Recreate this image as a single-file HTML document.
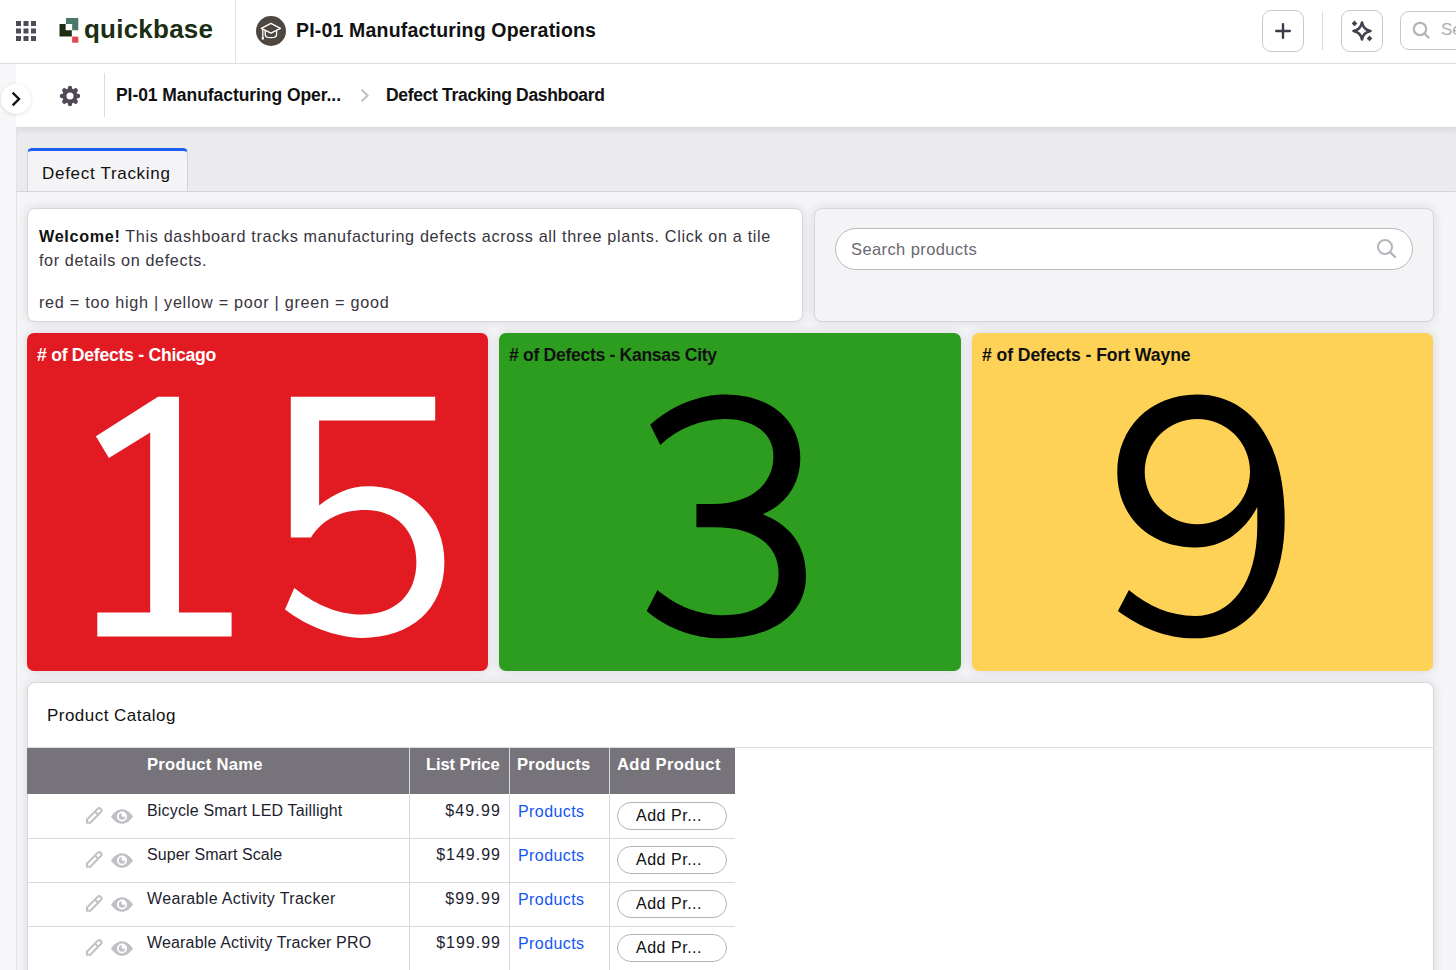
<!DOCTYPE html>
<html><head><meta charset="utf-8">
<style>
html,body{margin:0;padding:0;width:1456px;height:970px;overflow:hidden;background:#f5f5f7;font-family:"Liberation Sans",sans-serif;}
.a{position:absolute;}
.t{position:absolute;white-space:nowrap;line-height:1;}
#topbar{left:0;top:0;width:1456px;height:63px;background:#fff;border-bottom:1px solid #dedde2;}
#leftstrip{left:0;top:64px;width:16px;height:906px;background:#f7f7f9;}
#crumbbar{left:16px;top:64px;width:1440px;height:63px;background:#fff;}
#tabbar{left:16px;top:127px;width:1440px;height:64px;background:#ebebee;border-bottom:1px solid #d3d3d8;box-shadow:inset 0 7px 7px -5px rgba(0,0,0,0.10);}
#page{left:16px;top:192px;width:1440px;height:778px;background:#f5f5f7;}
.card{position:absolute;background:#fff;border:1px solid #d6d6da;border-radius:8px;box-sizing:border-box;box-shadow:0 0 10px 1px rgba(40,40,70,0.11);}
.tile{position:absolute;border-radius:7px;box-shadow:0 0 10px 1px rgba(40,40,70,0.12);}
</style></head><body>

<div id="topbar" class="a"></div>
<div id="leftstrip" class="a"></div>
<div id="crumbbar" class="a"></div>
<div id="tabbar" class="a"></div>
<div id="page" class="a"></div>
<div class="a" style="left:16px;top:127px;width:1px;height:843px;background:#e2e2e6"></div>

<!-- grid icon -->
<svg class="a" style="left:0;top:0" width="60" height="63">
<g fill="#4f4a57">
<rect x="16" y="21" width="5" height="5"/><rect x="23.5" y="21" width="5" height="5"/><rect x="31" y="21" width="5" height="5"/>
<rect x="16" y="28.5" width="5" height="5"/><rect x="23.5" y="28.5" width="5" height="5"/><rect x="31" y="28.5" width="5" height="5"/>
<rect x="16" y="36" width="5" height="5"/><rect x="23.5" y="36" width="5" height="5"/><rect x="31" y="36" width="5" height="5"/>
</g>
</svg>
<svg class="a" style="left:55px;top:14px" width="30" height="32">
<path d="M11 4h12.3v12.2h-6.15v-6.1H11z" fill="#4a7868"/>
<path d="M4.5 10.1h6.15v6.1h6.15v6.2H4.5z" fill="#1b2e14"/>
<rect x="17.15" y="22.6" width="6.15" height="6.1" fill="#e5434a"/>
</svg>
<div class="t" style="left:84px;top:15.5px;font-size:26px;font-weight:700;color:#1b2d13;letter-spacing:0.23px">quickbase</div>
<div class="a" style="left:235px;top:0;width:1px;height:63px;background:#e2e2e6"></div>
<svg class="a" style="left:256px;top:16px" width="30" height="30" viewBox="0 0 30 30">
<circle cx="15" cy="15" r="15" fill="#4d4641"/>
<g fill="none" stroke="#fff" stroke-width="1.3" stroke-linejoin="round">
<path d="M5.3 12.3L14.9 7.4l9.6 4.9-9.6 4.9z"/>
<path d="M9.2 14.3v4.2c0 1.9 2.6 3.2 5.7 3.2s5.7-1.3 5.7-3.2v-4.2"/>
<path d="M6.8 13.1v7.5"/>
</g>
<path d="M6 20.5h1.7l.3 3H5.6z" fill="#fff"/>
</svg>
<div class="t" style="left:296px;top:21.2px;font-size:19.5px;font-weight:700;color:#111;letter-spacing:0.18px">PI-01 Manufacturing Operations</div>

<!-- breadcrumb -->
<div class="a" style="left:1px;top:84px;width:30px;height:30px;border-radius:50%;background:#fff;box-shadow:0 1px 4px rgba(0,0,0,0.12)"></div>
<svg class="a" style="left:1px;top:84px" width="30" height="30"><path d="M12.5 9.5l5.5 5.5-5.5 5.5" fill="none" stroke="#111" stroke-width="2.4" stroke-linecap="square"/></svg>
<svg class="a" style="left:59px;top:85px" width="22" height="22" viewBox="0 0 22 22">
<g stroke="#504a58" stroke-width="4.4" stroke-linecap="round"><path d="M16.00 11.00L19.00 11.00"/><path d="M14.54 14.54L16.66 16.66"/><path d="M11.00 16.00L11.00 19.00"/><path d="M7.46 14.54L5.34 16.66"/><path d="M6.00 11.00L3.00 11.00"/><path d="M7.46 7.46L5.34 5.34"/><path d="M11.00 6.00L11.00 3.00"/><path d="M14.54 7.46L16.66 5.34"/></g>
<circle cx="11" cy="11" r="7.6" fill="#504a58"/>
<circle cx="11" cy="11" r="3.5" fill="#fff"/>
</svg>
<div class="a" style="left:104px;top:73px;width:1px;height:44px;background:#dcdbe0"></div>
<div class="t" style="left:116px;top:87.1px;font-size:17.5px;font-weight:700;color:#111;letter-spacing:-0.06px">PI-01 Manufacturing Oper...</div>
<svg class="a" style="left:356px;top:85px" width="18" height="20"><path d="M5.5 4.5l6 6-6 6" fill="none" stroke="#c4c3c9" stroke-width="2.2"/></svg>
<div class="t" style="left:386px;top:87.1px;font-size:17.5px;font-weight:700;color:#111;letter-spacing:-0.32px">Defect Tracking Dashboard</div>
<!-- tab -->
<div class="a" style="left:27px;top:148px;width:161px;height:43px;box-sizing:border-box;background:#f4f4f6;border-left:1px solid #d3d3d8;border-right:1px solid #d3d3d8;border-top:3px solid #1e5cf2;border-radius:5px 5px 0 0"></div>
<div class="t" style="left:42px;top:164.7px;font-size:17px;color:#111;letter-spacing:0.7px">Defect Tracking</div>

<!-- welcome card -->
<div class="card" style="left:27px;top:208px;width:776px;height:114px"></div>
<div class="t" style="left:39px;top:228.2px;font-size:16.2px;color:#38343e;letter-spacing:0.66px"><b style="color:#111">Welcome!</b> This dashboard tracks manufacturing defects across all three plants. Click on a tile</div>
<div class="t" style="left:39px;top:251.6px;font-size:16.2px;color:#38343e;letter-spacing:0.62px">for details on defects.</div>
<div class="t" style="left:39px;top:293.9px;font-size:16.2px;color:#38343e;letter-spacing:0.73px">red = too high | yellow = poor | green = good</div>
<!-- search card -->
<div class="card" style="left:814px;top:208px;width:620px;height:114px;background:#f4f4f6"></div>
<div class="a" style="left:835px;top:228px;width:578px;height:42px;box-sizing:border-box;border:1px solid #b9b8be;border-radius:21px;background:#fff"></div>
<div class="t" style="left:851px;top:240.9px;font-size:16.5px;color:#6b6871;letter-spacing:0.4px">Search products</div>
<svg class="a" style="left:1370px;top:232px" width="34" height="34">
<circle cx="15" cy="15" r="7" fill="none" stroke="#b6b4ba" stroke-width="2"/>
<path d="M20 20l5 5" stroke="#b6b4ba" stroke-width="2.4" stroke-linecap="round"/>
</svg>
<!-- tiles -->
<div class="tile" style="left:27px;top:333px;width:461px;height:338px;background:#e21b22"></div>
<div class="tile" style="left:499px;top:333px;width:461.5px;height:338px;background:#2c9d1e"></div>
<div class="tile" style="left:972px;top:333px;width:461px;height:338px;background:#fed256"></div>
<div class="t" style="left:37px;top:347px;font-size:17.6px;font-weight:700;color:#fff;letter-spacing:-0.26px"># of Defects - Chicago</div>
<div class="t" style="left:509px;top:347px;font-size:17.6px;font-weight:700;color:#111;letter-spacing:-0.32px"># of Defects - Kansas City</div>
<div class="t" style="left:982px;top:347px;font-size:17.6px;font-weight:700;color:#111;letter-spacing:-0.08px"># of Defects - Fort Wayne</div>

<!-- big digits -->
<svg class="a" style="left:0;top:0" width="1456" height="970">
<path fill="#fff" d="M158 396.7H179V612.5H231.6V636.4H97.3V612.5H150.2V432.5L108.9 457.9L95.9 436.3Z"/>
<path fill="#fff" d="M290.8 396.7H435.2V420.4H319.1V505.6C335 493 350 486.3 368 486.3C415 486.3 444.4 520 444.4 562C444.4 610 410 637.9 362 637.9C335 637.9 305 625 285 609.6L294.3 587.9C312 602 335 614.5 362 614.5C395 614.5 416.4 595 416.4 562C416.4 530 395 510 366 510C340 510 322 520 311 537.4H290.8Z"/>
<path fill="#000" d="M650.2 424.7C672 405 700 394.4 725 394.4C770 394.4 800.3 420 800.3 458C800.3 485 785 505 762.8 514.2C790 525 806 545 806 576C806 615 772 638.3 722 638.3C692 638.3 665 627 646.7 610.9L657.4 590.1C675 605 698 615.2 722 615.2C757 615.2 778.6 600 778.6 574C778.6 545 755 527.2 715 527.2L696.4 527.2L696.4 504.1L712 504.1C750 504.1 773.4 485 773.4 456C773.4 432 752 419 725 419C702 419 678 428 660.3 445Z"/>
<path fill="#000" fill-rule="evenodd" d="M1117.9 610.9C1140 627 1165 638.3 1195 638.3C1250 638.3 1284.7 590 1284.7 520C1284.7 440 1250 394.4 1197 394.4C1150 394.4 1117.3 428 1117.3 472C1117.3 517 1150 547.4 1195 547.4C1225 547.4 1245 530 1257.3 507L1257.3 525C1257.3 585 1230 616 1195 616C1170 616 1148 606 1128.9 590.1Z M1144.7 471.6A52.6 52.6 0 1 0 1250 471.6A52.6 52.6 0 1 0 1144.7 471.6Z"/>
</svg>

<!-- catalog -->
<div class="card" style="left:27px;top:682px;width:1407px;height:320px;"></div>
<div class="t" style="left:47px;top:706.5px;font-size:17px;color:#111;letter-spacing:0.47px">Product Catalog</div>
<div class="a" style="left:28px;top:747px;width:1405px;height:1px;background:#dcdbe0"></div>
<div class="a" style="left:27px;top:748px;width:708px;height:46px;background:#77737b"></div>
<div class="a" style="left:409px;top:748px;width:1px;height:222px;background:#d9d8dd"></div>
<div class="a" style="left:509px;top:748px;width:1px;height:222px;background:#d9d8dd"></div>
<div class="a" style="left:609px;top:748px;width:1px;height:222px;background:#d9d8dd"></div>
<div class="t" style="left:147px;top:756.5px;font-size:16.6px;font-weight:700;color:#fff;letter-spacing:0.27px">Product Name</div>
<div class="t" style="left:426px;top:756.5px;font-size:16.6px;font-weight:700;color:#fff;letter-spacing:-0.12px">List Price</div>
<div class="t" style="left:517px;top:756.5px;font-size:16.6px;font-weight:700;color:#fff;letter-spacing:0.2px">Products</div>
<div class="t" style="left:617px;top:756.5px;font-size:16.6px;font-weight:700;color:#fff;letter-spacing:0.39px">Add Product</div>
<svg class="a" style="left:80px;top:800px" width="60" height="30">
<path d="M7 19.44L17.57 8.87A2.3 2.3 0 0 1 20.83 12.13L10.26 22.7L7 22.7Z M14.9 11.5L18.2 14.8" fill="none" stroke="#c2c0c6" stroke-width="2.1" stroke-linejoin="miter"/>
<path d="M31 16.5C34 11.8 38 9.2 42 9.2s8 2.6 11 7.3c-3 4.7-7 7.3-11 7.3s-8-2.6-11-7.3z" fill="#c2c0c6"/>
<circle cx="42" cy="16.5" r="5" fill="#fff"/>
<circle cx="42" cy="16.5" r="3.2" fill="#c2c0c6"/>
<circle cx="43.6" cy="14.9" r="2.1" fill="#fff"/>
</svg>
<div class="t" style="left:147px;top:802.8px;font-size:16px;color:#221e30;letter-spacing:0.17px">Bicycle Smart LED Taillight</div>
<div class="t" style="left:409px;width:92px;text-align:right;top:802.8px;font-size:16px;color:#221e30;letter-spacing:1.13px">$49.99</div>
<div class="t" style="left:518px;top:804.2px;font-size:16px;color:#1456f2;letter-spacing:0.41px">Products</div>
<div class="a" style="left:617px;top:802px;width:110px;height:28px;box-sizing:border-box;border:1px solid #b5b4ba;border-radius:14px;background:#fff"></div>
<div class="t" style="left:636px;top:807.9px;font-size:16px;color:#111;letter-spacing:0.52px">Add Pr...</div>
<div class="a" style="left:27px;top:838px;width:708px;height:1px;background:#d9d8dd"></div>
<svg class="a" style="left:80px;top:844px" width="60" height="30">
<path d="M7 19.44L17.57 8.87A2.3 2.3 0 0 1 20.83 12.13L10.26 22.7L7 22.7Z M14.9 11.5L18.2 14.8" fill="none" stroke="#c2c0c6" stroke-width="2.1" stroke-linejoin="miter"/>
<path d="M31 16.5C34 11.8 38 9.2 42 9.2s8 2.6 11 7.3c-3 4.7-7 7.3-11 7.3s-8-2.6-11-7.3z" fill="#c2c0c6"/>
<circle cx="42" cy="16.5" r="5" fill="#fff"/>
<circle cx="42" cy="16.5" r="3.2" fill="#c2c0c6"/>
<circle cx="43.6" cy="14.9" r="2.1" fill="#fff"/>
</svg>
<div class="t" style="left:147px;top:846.8px;font-size:16px;color:#221e30;letter-spacing:0.06px">Super Smart Scale</div>
<div class="t" style="left:409px;width:92px;text-align:right;top:846.8px;font-size:16px;color:#221e30;letter-spacing:1.0px">$149.99</div>
<div class="t" style="left:518px;top:848.2px;font-size:16px;color:#1456f2;letter-spacing:0.41px">Products</div>
<div class="a" style="left:617px;top:846px;width:110px;height:28px;box-sizing:border-box;border:1px solid #b5b4ba;border-radius:14px;background:#fff"></div>
<div class="t" style="left:636px;top:851.9px;font-size:16px;color:#111;letter-spacing:0.52px">Add Pr...</div>
<div class="a" style="left:27px;top:882px;width:708px;height:1px;background:#d9d8dd"></div>
<svg class="a" style="left:80px;top:888px" width="60" height="30">
<path d="M7 19.44L17.57 8.87A2.3 2.3 0 0 1 20.83 12.13L10.26 22.7L7 22.7Z M14.9 11.5L18.2 14.8" fill="none" stroke="#c2c0c6" stroke-width="2.1" stroke-linejoin="miter"/>
<path d="M31 16.5C34 11.8 38 9.2 42 9.2s8 2.6 11 7.3c-3 4.7-7 7.3-11 7.3s-8-2.6-11-7.3z" fill="#c2c0c6"/>
<circle cx="42" cy="16.5" r="5" fill="#fff"/>
<circle cx="42" cy="16.5" r="3.2" fill="#c2c0c6"/>
<circle cx="43.6" cy="14.9" r="2.1" fill="#fff"/>
</svg>
<div class="t" style="left:147px;top:890.8px;font-size:16px;color:#221e30;letter-spacing:0.34px">Wearable Activity Tracker</div>
<div class="t" style="left:409px;width:92px;text-align:right;top:890.8px;font-size:16px;color:#221e30;letter-spacing:1.13px">$99.99</div>
<div class="t" style="left:518px;top:892.2px;font-size:16px;color:#1456f2;letter-spacing:0.41px">Products</div>
<div class="a" style="left:617px;top:890px;width:110px;height:28px;box-sizing:border-box;border:1px solid #b5b4ba;border-radius:14px;background:#fff"></div>
<div class="t" style="left:636px;top:895.9px;font-size:16px;color:#111;letter-spacing:0.52px">Add Pr...</div>
<div class="a" style="left:27px;top:926px;width:708px;height:1px;background:#d9d8dd"></div>
<svg class="a" style="left:80px;top:932px" width="60" height="30">
<path d="M7 19.44L17.57 8.87A2.3 2.3 0 0 1 20.83 12.13L10.26 22.7L7 22.7Z M14.9 11.5L18.2 14.8" fill="none" stroke="#c2c0c6" stroke-width="2.1" stroke-linejoin="miter"/>
<path d="M31 16.5C34 11.8 38 9.2 42 9.2s8 2.6 11 7.3c-3 4.7-7 7.3-11 7.3s-8-2.6-11-7.3z" fill="#c2c0c6"/>
<circle cx="42" cy="16.5" r="5" fill="#fff"/>
<circle cx="42" cy="16.5" r="3.2" fill="#c2c0c6"/>
<circle cx="43.6" cy="14.9" r="2.1" fill="#fff"/>
</svg>
<div class="t" style="left:147px;top:934.8px;font-size:16px;color:#221e30;letter-spacing:0.17px">Wearable Activity Tracker PRO</div>
<div class="t" style="left:409px;width:92px;text-align:right;top:934.8px;font-size:16px;color:#221e30;letter-spacing:1.0px">$199.99</div>
<div class="t" style="left:518px;top:936.2px;font-size:16px;color:#1456f2;letter-spacing:0.41px">Products</div>
<div class="a" style="left:617px;top:934px;width:110px;height:28px;box-sizing:border-box;border:1px solid #b5b4ba;border-radius:14px;background:#fff"></div>
<div class="t" style="left:636px;top:939.9px;font-size:16px;color:#111;letter-spacing:0.52px">Add Pr...</div>
<!-- right buttons -->
<div class="a" style="left:1262px;top:10px;width:42px;height:42px;box-sizing:border-box;border:1px solid #c9c8cd;border-radius:9px;background:#fff"></div>
<svg class="a" style="left:1262px;top:10px" width="42" height="42"><path d="M21 14.2v13.6M14.2 21h13.6" stroke="#403b48" stroke-width="2.4" stroke-linecap="round"/></svg>
<div class="a" style="left:1322px;top:12px;width:1px;height:38px;background:#dcdbe0"></div>
<div class="a" style="left:1341px;top:10px;width:42px;height:42px;box-sizing:border-box;border:1px solid #c9c8cd;border-radius:9px;background:#fff"></div>
<svg class="a" style="left:1341px;top:10px" width="42" height="42">
<path d="M21 12.5 Q22.3 19.7 29.5 21 Q22.3 22.3 21 29.5 Q19.7 22.3 12.5 21 Q19.7 19.7 21 12.5z" fill="none" stroke="#463f4e" stroke-width="2.6" stroke-linejoin="round"/>
<path d="M13.5 10.6l2.8 2.8-2.8 2.8-2.8-2.8z M28.5 25.6l2.8 2.8-2.8 2.8-2.8-2.8z" fill="#463f4e"/>
</svg>
<div class="a" style="left:1400px;top:11px;width:80px;height:39px;box-sizing:border-box;border:1px solid #c9c8cd;border-radius:9px;background:#fff"></div>
<svg class="a" style="left:1400px;top:11px" width="56" height="39">
<circle cx="20" cy="18" r="6.2" fill="none" stroke="#b5b3b9" stroke-width="2.2"/>
<path d="M24.5 22.5l4 4" stroke="#b5b3b9" stroke-width="2.4" stroke-linecap="round"/>
</svg>
<div class="t" style="left:1441px;top:21.2px;font-size:17px;color:#b0aeb4">Search</div>

</body></html>
